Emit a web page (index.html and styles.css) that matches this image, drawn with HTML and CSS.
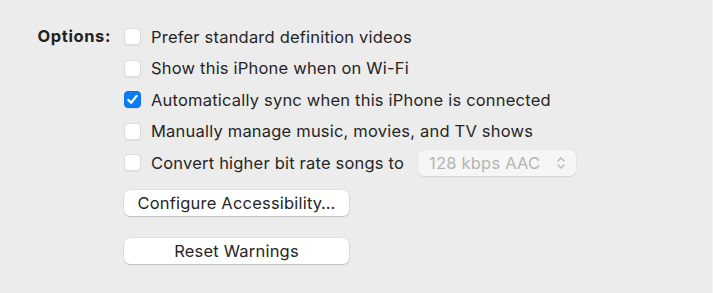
FILE: index.html
```html
<!DOCTYPE html>
<html>
<head>
<meta charset="utf-8">
<link rel="stylesheet" href="styles.css">
</head>
<body>
<div class="panel">
  <div class="label">Options:</div>
  <div class="options">
    <div class="row"><span class="box"></span><span class="text">Prefer standard definition videos</span></div>
    <div class="row"><span class="box"></span><span class="text">Show this iPhone when on Wi-Fi</span></div>
    <div class="row"><span class="box checked"><svg viewBox="0 0 17 17" width="17" height="17"><path d="M4.3 8.9 L7.2 11.8 L12.6 4.9" fill="none" stroke="#fff" stroke-width="2.2" stroke-linecap="round" stroke-linejoin="round"/></svg></span><span class="text">Automatically sync when this iPhone is connected</span></div>
    <div class="row"><span class="box"></span><span class="text">Manually manage music, movies, and TV shows</span></div>
    <div class="row"><span class="box"></span><span class="text">Convert higher bit rate songs to</span>
      <span class="popup"><span class="popup-text">128 kbps AAC</span><svg class="chev" viewBox="0 0 10 16" width="10" height="16"><path d="M2 6 L5 3 L8 6 M2 10 L5 13 L8 10" fill="none" stroke="#b8b8b8" stroke-width="1.4" stroke-linecap="round" stroke-linejoin="round"/></svg></span>
    </div>
    <button class="btn first">Configure Accessibility…</button>
    <button class="btn second">Reset Warnings</button>
  </div>
</div>
</body>
</html>
```

FILE: styles.css
```css
html, body {
  margin: 0;
  padding: 0;
  background: #ececec;
  width: 713px;
  height: 293px;
  overflow: hidden;
}
body {
  font-family: Inter, "Liberation Sans", sans-serif;
  font-size: 16.5px;
  letter-spacing: 0.2px;
  color: #262626;
  box-sizing: border-box;
  border-right: 1px solid #f4f4f4;
}
.panel {
  display: grid;
  grid-template-columns: 98px auto;
  column-gap: 13px;
  padding-left: 13px;
  padding-top: 21px;
}
.label {
  font-weight: 700;
  letter-spacing: 0.6px;
  text-align: right;
  height: 31.5px;
  line-height: 31.5px;
  color: #222;
}
.options {
  display: flex;
  flex-direction: column;
  align-items: flex-start;
}
.row {
  height: 31.5px;
  display: flex;
  align-items: center;
}
.box {
  width: 17px;
  height: 17px;
  box-sizing: border-box;
  border-radius: 4px;
  background: #fff;
  border: 1px solid #dcdcdc;
  box-shadow: 0 0.5px 1px rgba(0,0,0,0.06);
  margin-right: 10px;
  display: flex;
}
.box.checked {
  background: #0b7cf7;
  border-color: #0a72e6;
}
.box.checked svg {
  margin: -1px;
}
.text {
  white-space: nowrap;
}
.popup {
  margin-left: 14px;
  width: 158px;
  height: 26px;
  box-sizing: border-box;
  border-radius: 6px;
  background: #f6f6f6;
  box-shadow: 0 0 0 0.5px rgba(0,0,0,0.05), 0 1px 1.5px rgba(0,0,0,0.08);
  display: flex;
  align-items: center;
  justify-content: space-between;
  padding: 0 10px 0 11px;
  color: #b4b4b4;
}
.btn {
  font: inherit;
  letter-spacing: inherit;
  color: #262626;
  width: 225px;
  height: 26px;
  border: none;
  border-radius: 6px;
  background: #fff;
  box-shadow: 0 0 0 0.5px rgba(0,0,0,0.08), 0 1px 1.5px rgba(0,0,0,0.15);
  padding: 0;
  text-align: center;
}
.btn.first {
  margin-top: 11.5px;
}
.btn.second {
  margin-top: 22px;
}
```
